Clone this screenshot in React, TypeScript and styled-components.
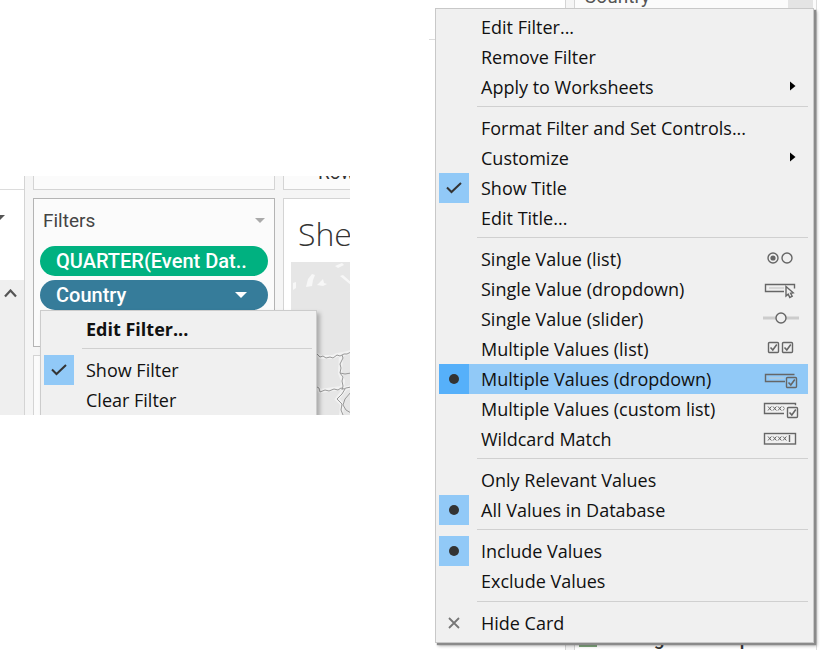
import React from "react";
import styled, { createGlobalStyle } from "styled-components";

const GlobalStyle = createGlobalStyle`
  * { box-sizing: border-box; }
  body { margin: 0; background: #fff; }
  button, input { font: inherit; color: inherit; margin: 0; }
`;

const Page = styled.main`
  display: flex;
  justify-content: space-between;
  align-items: flex-start;
  min-height: 100vh;
  overflow: hidden;
  font-family: "Open Sans", "Noto Sans", sans-serif;
  font-size: 18px;
  color: #111;
`;

/* Workspace */
const Workspace = styled.section`
  position: relative;
  flex: 0 1 350px;
  display: grid;
  grid-template-columns: 25px 242px minmax(0, 1fr);
  column-gap: 8px;
  height: 239px;
  margin-top: 176px;
  overflow: hidden;
  background: #f5f5f5;
`;
const Rail = styled.div`
  display: grid;
  grid-template-rows: 14px 90px 1fr;
  border-right: 1px solid #d4d4d4;
  background: #fff;
`;
const RailTop = styled.div`
  border-bottom: 1px solid #dcdcdc;
`;
const RailMenu = styled.button`
  border: 0;
  padding: 25px 0 0;
  background: none;
  display: flex;
  align-items: flex-start;
`;
const RailScroll = styled.button`
  border: 0;
  padding: 9px 0 0 4px;
  background: #efefef;
  display: flex;
  align-items: flex-start;
`;
const Column = styled.div`
  display: grid;
  grid-template-rows: 14px 149px 1fr;
  row-gap: 8px;
`;
const SheetColumn = styled(Column)`
  grid-template-rows: 14px 1fr;
`;
const Card = styled.div<{ $strong?: boolean }>`
  border: 1px solid ${(p) => (p.$strong ? "#b4b4b4" : "#d4d4d4")};
  background: #fbfbfb;
  overflow: hidden;
`;
const CutCard = styled(Card)`
  border-top: 0;
`;
const SheetTop = styled(CutCard)`
  border-right: 0;
  display: flex;
  align-items: flex-end;
  padding: 0 0 4px 34px;
  font: 19px/24px Roboto, sans-serif;
  color: #333;
`;
const FilterHead = styled.header`
  display: flex;
  align-items: center;
  justify-content: space-between;
  height: 44px;
  padding: 0 9px;
  font: 19px/24px Roboto, sans-serif;
  color: #444;
`;
const Title = styled.h2`
  margin: 0;
  font: inherit;
`;
const IconButton = styled.button`
  border: 0;
  padding: 0 0 2px;
  background: none;
  display: flex;
`;
const Pill = styled.button<{ $tone: string }>`
  display: flex;
  align-items: center;
  justify-content: space-between;
  width: 228px;
  height: 30px;
  margin: 4px 0 0 6px;
  padding: 0 21px 0 16px;
  border: 0;
  border-radius: 15px;
  background: ${(p) => p.$tone};
  color: #fff;
  font: 500 20px/24px Roboto, sans-serif;
  white-space: nowrap;
`;
const PillStack = styled.div`
  margin-top: -1px;
`;
const Sheet = styled(Card)`
  border-right: 0;
  background: #fff;
  padding-left: 7px;
`;
const SheetTitle = styled.h1`
  margin: 0;
  padding: 11px 0 0 7px;
  height: 63px;
  font: 300 32px/48px "Open Sans", sans-serif;
  color: #333;
`;

/* Menus */
const Menu = styled.div`
  background: #f0f0f0;
  border: 1px solid #ccc;
`;
const FilterMenu = styled(Menu)`
  position: absolute;
  left: 40px;
  top: 134px;
  width: 277px;
  padding: 3px 4px 3px 3px;
  box-shadow: 3px 3px 4px rgba(0, 0, 0, 0.25);
`;
const CardMenu = styled(Menu)`
  position: relative;
  margin: 8px 6px 0 6px;
  padding: 3px 5px 4px 3px;
  border: 1px solid #c8c8c8;
  box-shadow: 2px 2px 1px #8a8a8a, 3px 3px 3px rgba(0, 0, 0, 0.3);
`;
const itemLayout = `
  display: grid;
  grid-template-columns: 30px minmax(0, 1fr) auto;
  column-gap: 12px;
  align-items: center;
  width: 100%;
  height: 30px;
  padding: 0 9px 0 0;
  border: 0;
  text-align: left;
  line-height: 28px;
  white-space: nowrap;
`;
const Action = styled.button<{ $bold?: boolean }>`
  ${itemLayout}
  background: none;
  font-weight: ${(p) => (p.$bold ? 700 : 400)};
`;
const Choice = styled.label<{ $active?: boolean }>`
  ${itemLayout}
  background: ${(p) => (p.$active ? "#91c9f7" : "none")};
`;
const Mark = styled.span<{ $active?: boolean }>`
  display: grid;
  place-items: center;
  width: 30px;
  height: 30px;
  & > * { grid-area: 1 / 1; }
  & > svg { visibility: hidden; pointer-events: none; }
  & > input:checked + svg { visibility: visible; }
  & > input:checked { background: ${(p) => (p.$active ? "#56b0fa" : "#91c9f7")}; }
`;
const MarkInput = styled.input`
  appearance: none;
  width: 30px;
  height: 30px;
`;
const Leading = styled.span`
  display: grid;
  place-items: center;
`;
const Rule = styled.hr<{ $last?: boolean }>`
  height: 1px;
  margin: ${(p) => (p.$last ? "5px 0 6px 38px" : "4px 0 6px 38px")};
  border: 0;
  background: #d0d0d0;
`;

/* Card menu surroundings */
const CardArea = styled.section`
  position: relative;
  flex: 0 1 391px;
  min-height: 100vh;
`;
const Backdrop = styled.div`
  position: absolute;
  inset: 0;
  display: grid;
  grid-template-columns: 136px 10px minmax(0, 1fr);
  overflow: hidden;
`;
const Canvas = styled.div`
  height: 40px;
  border-bottom: 1px solid #dcdcdc;
`;
const Gutter = styled.div`
  border: 1px solid #d4d4d4;
  border-width: 0 1px;
  background: #f5f5f5;
`;
const Legend = styled.div`
  display: flex;
  flex-direction: column;
  justify-content: space-between;
  border-right: 1px solid #ddd;
  margin-right: 3px;
`;
const LegendHead = styled.div`
  display: flex;
  justify-content: space-between;
  height: 8px;
  padding-right: 3px;
  background: #fbfbfb;
  overflow: hidden;
`;
const LegendTitle = styled.span`
  margin: -15px 0 0 9px;
  font: 19px/24px Roboto, sans-serif;
  color: #555;
`;
const LegendButton = styled.span`
  width: 25px;
  background: #e4e4e4;
`;
const LegendRow = styled.div`
  display: flex;
  align-items: flex-end;
  gap: 6px;
  height: 26px;
  padding: 0 6px 0 4px;
  overflow: hidden;
  white-space: nowrap;
  font: 500 19px/22px Roboto, sans-serif;
  color: #333;
`;
const Swatch = styled.span`
  width: 18px;
  height: 18px;
  margin-bottom: 3px;
  background: #7fa87c;
`;

const Caret = ({ color, size }: { color: string; size: number }) => (
  <svg width={size} height={size / 2} viewBox="0 0 12 6" aria-hidden="true">
    <path d="M0 0h12L6 6z" fill={color} />
  </svg>
);
const Tick = () => (
  <svg width="16" height="12" viewBox="0 0 16 12" aria-hidden="true">
    <path d="M1 5.5 5.5 10 15 1" fill="none" stroke="#333" strokeWidth="2" />
  </svg>
);
const Dot = () => (
  <svg width="10" height="10" viewBox="0 0 10 10" aria-hidden="true">
    <circle cx="5" cy="5" r="5" fill="#333" />
  </svg>
);
const Submenu = () => (
  <svg width="9" height="12" viewBox="0 0 9 12" aria-hidden="true">
    <path d="M0 0.5v9L5.5 5z" fill="#000" />
  </svg>
);

const Tickbox = ({ x, y }: { x: number; y: number }) => (
  <g transform={`translate(${x} ${y})`}>
    <rect x="0.5" y="0.5" width="10" height="10" rx="1" />
    <path d="M2.5 5.5 4.8 8l4-5.5" strokeWidth="1.6" />
  </g>
);
const Crosses = ({ count }: { count: number }) => (
  <>
    {Array.from({ length: count }, (_, i) => (
      <path key={i} d={`M${5 + i * 5} 8.5l3.4 4m0-4l-3.4 4`} strokeWidth="1" />
    ))}
  </>
);
type Kind = "radio" | "dropdown" | "slider" | "ticks" | "multidrop" | "custom" | "wildcard";
const drawings: Record<Kind, React.ReactNode> = {
  radio: (
    <>
      <circle cx="10" cy="10" r="5" />
      <circle cx="10" cy="10" r="2.6" fill="#666" stroke="none" />
      <circle cx="24" cy="10" r="5" />
    </>
  ),
  dropdown: (
    <>
      <path d="M21 13.5H2.5v-7h29v4" />
      <path d="M6 10h15" stroke="#ccc" />
      <path d="M23 8.5v9.5l2.2-1.8 1.6 3.3 2.4-1.2-1.6-3.1 2.6-.4z" fill="#f0f0f0" />
    </>
  ),
  slider: (
    <>
      <path d="M0 10h36" stroke="#ccc" strokeWidth="3" />
      <circle cx="18" cy="10" r="5" fill="#f0f0f0" />
    </>
  ),
  ticks: (
    <>
      <Tickbox x={5} y={4} />
      <Tickbox x={19} y={4} />
    </>
  ),
  multidrop: (
    <>
      <path d="M22 13.5H2.5v-7h29" />
      <path d="M6 10h15" stroke="#b5c9d9" />
      <Tickbox x={23} y={9} />
    </>
  ),
  custom: (
    <>
      <path d="M21 15.5H1.5v-10h31v2" />
      <Crosses count={4} />
      <rect x="21.5" y="7.5" width="14" height="13" fill="#f0f0f0" stroke="none" />
      <Tickbox x={24} y={9} />
    </>
  ),
  wildcard: (
    <>
      <rect x="1.5" y="5.5" width="31" height="10.5" />
      <Crosses count={4} />
      <path d="M26.5 7v7" />
    </>
  ),
};
const KindIcon = ({ kind }: { kind: Kind }) => (
  <svg width="36" height="22" viewBox="0 0 36 22" fill="none" stroke="#666" strokeWidth="1.4" aria-hidden="true">
    {drawings[kind]}
  </svg>
);

type ChoiceProps = {
  type: "checkbox" | "radio";
  name: string;
  label: string;
  checked?: boolean;
  active?: boolean;
  kind?: Kind;
};
const ChoiceItem = ({ type, name, label, checked, active, kind }: ChoiceProps) => (
  <Choice $active={active}>
    <Mark $active={active}>
      <MarkInput type={type} name={name} defaultChecked={checked} />
      {type === "radio" ? <Dot /> : <Tick />}
    </Mark>
    <span>{label}</span>
    {kind && <KindIcon kind={kind} />}
  </Choice>
);
const ActionItem = ({ label, submenu, bold, icon }: { label: string; submenu?: boolean; bold?: boolean; icon?: React.ReactNode }) => (
  <Action type="button" $bold={bold}>
    <Leading>{icon}</Leading>
    <span>{label}</span>
    {submenu && <Submenu />}
  </Action>
);

const modes: { label: string; kind: Kind }[] = [
  { label: "Single Value (list)", kind: "radio" },
  { label: "Single Value (dropdown)", kind: "dropdown" },
  { label: "Single Value (slider)", kind: "slider" },
  { label: "Multiple Values (list)", kind: "ticks" },
  { label: "Multiple Values (dropdown)", kind: "multidrop" },
  { label: "Multiple Values (custom list)", kind: "custom" },
  { label: "Wildcard Match", kind: "wildcard" },
];

const MapView = () => (
  <svg width="60" height="153" viewBox="0 0 60 153" aria-hidden="true">
    <rect width="60" height="153" fill="#e6e6e6" />
    <g fill="#f7f7f7">
      <path d="M2 21l3-1v6l-3 2zM15 25l2-8 4-5 3 1-2 5-1 6zM26 23l6-6 1 4 3 1-4 2zM44 4l7-3 2 2-6 3zM49 14l3-1 8 7v3z" />
    </g>
    <g fill="none" stroke="#f2f2f2" strokeWidth="4">
      <path d="M26 92l3 3 13 0 4-2 7-1 7-2M50 93l-1 18 3 8-1 9M26 125l3 4 14-2 7-1 3 1 7-2M54 127l-8 10 5 5-1 12" />
    </g>
    <g fill="none" stroke="#999" strokeWidth="1">
      <path d="M26 92l3 3 3-1 3 2 4-1 3 1 4-3 3 1 4-2 3 0 4-2M51 93l1 3-3 6 1 4-1 5 3 4-1 4 1 5-1 4M26 125l2 1 1 4 5-2 4 1 5-2 4 1 3-2 3 1 2-1 5-1M54 127l-3 5-5 5 5 5-1 6 2 5M60 130l-6 7-2 6 3 5 5 3M49 111l5 1 6-1" />
    </g>
  </svg>
);

export default function App() {
  return (
    <>
      <GlobalStyle />
      <Page>
        <Workspace>
          <Rail>
            <RailTop />
            <RailMenu type="button" aria-label="Data pane menu">
              <svg width="5" height="6" viewBox="0 0 5 6" aria-hidden="true">
                <path d="M0 0h5L0 5z" fill="#555" />
              </svg>
            </RailMenu>
            <RailScroll type="button" aria-label="Scroll up">
              <svg width="13" height="9" viewBox="0 0 13 9" aria-hidden="true">
                <path d="M1 7.5l5.5-6 5.5 6" fill="none" stroke="#555" strokeWidth="2.2" />
              </svg>
            </RailScroll>
          </Rail>
          <Column>
            <CutCard />
            <Card $strong>
              <FilterHead>
                <Title>Filters</Title>
                <IconButton type="button" aria-label="Filters menu">
                  <Caret color="#aaa" size={10} />
                </IconButton>
              </FilterHead>
              <PillStack>
                <Pill type="button" $tone="#00b180">QUARTER(Event Dat..</Pill>
                <Pill type="button" $tone="#367c9a">
                  Country
                  <Caret color="#fff" size={12} />
                </Pill>
              </PillStack>
            </Card>
            <Card />
          </Column>
          <SheetColumn>
            <SheetTop>Rows</SheetTop>
            <Sheet>
              <SheetTitle>Sheet</SheetTitle>
              <MapView />
            </Sheet>
          </SheetColumn>
          <FilterMenu>
            <ActionItem label="Edit Filter..." bold />
            <Rule />
            <ChoiceItem type="checkbox" name="show-filter" label="Show Filter" checked />
            <ActionItem label="Clear Filter" />
          </FilterMenu>
        </Workspace>

        <CardArea>
          <Backdrop>
            <Canvas />
            <Gutter />
            <Legend>
              <LegendHead>
                <LegendTitle>Country</LegendTitle>
                <LegendButton />
              </LegendHead>
              <LegendRow>
                <Swatch />
                Strategic development...
              </LegendRow>
            </Legend>
          </Backdrop>
          <CardMenu>
            <ActionItem label="Edit Filter..." />
            <ActionItem label="Remove Filter" />
            <ActionItem label="Apply to Worksheets" submenu />
            <Rule />
            <ActionItem label="Format Filter and Set Controls..." />
            <ActionItem label="Customize" submenu />
            <ChoiceItem type="checkbox" name="show-title" label="Show Title" checked />
            <ActionItem label="Edit Title..." />
            <Rule />
            {modes.map((m) => (
              <ChoiceItem
                key={m.label}
                type="radio"
                name="mode"
                label={m.label}
                kind={m.kind}
                checked={m.kind === "multidrop"}
                active={m.kind === "multidrop"}
              />
            ))}
            <Rule />
            <ChoiceItem type="radio" name="scope" label="Only Relevant Values" />
            <ChoiceItem type="radio" name="scope" label="All Values in Database" checked />
            <Rule />
            <ChoiceItem type="radio" name="include" label="Include Values" checked />
            <ChoiceItem type="radio" name="include" label="Exclude Values" />
            <Rule $last />
            <ActionItem
              label="Hide Card"
              icon={
                <svg width="12" height="12" viewBox="0 0 12 12" aria-hidden="true">
                  <path d="M1 1l10 10M11 1L1 11" stroke="#777" strokeWidth="1.8" />
                </svg>
              }
            />
          </CardMenu>
        </CardArea>
      </Page>
    </>
  );
}
